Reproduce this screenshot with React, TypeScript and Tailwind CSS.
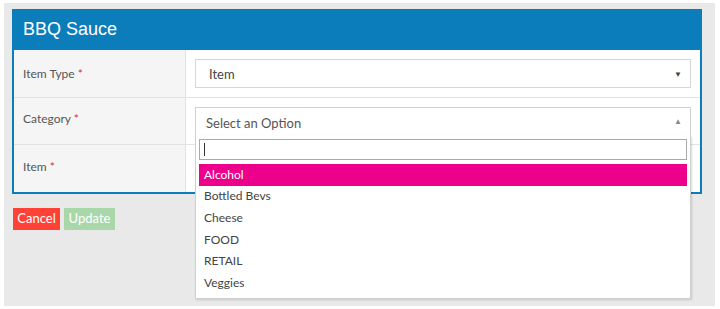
import React from 'react';

const options = ['Alcohol', 'Bottled Bevs', 'Cheese', 'FOOD', 'RETAIL', 'Veggies'];

const Label: React.FC<{ text: string; top?: string }> = ({ text, top = 'pt-[13px]' }) => (
  <div className={`w-[172px] shrink-0 border-r border-[#e2e2e2] bg-[#f5f5f5] pl-[9px] text-[12px] text-[#555] ${top}`}>
    {text} <span className="text-[#d9302c]">*</span>
  </div>
);

const App: React.FC = () => {
  return (
    <div className="h-[309px] w-[720px] bg-white pl-[4px] pt-[3px]" style={{ fontFamily: 'Lato, "Open Sans", sans-serif' }}>
      <div className="h-[303px] w-[711px] bg-[#e9e9e9] pl-[8px] pt-[6px]">
        <div className="w-[690px] border-2 border-t-0 border-[#0b7dbb] bg-white">
          <div
            className="flex h-[41px] items-center bg-[#0b7dbb] pl-[9px] text-[18px] text-white"
            style={{ fontFamily: '"Liberation Sans", Arial, sans-serif' }}
          >
            BBQ Sauce
          </div>
          <div className="flex h-[48px] border-b border-[#e2e2e2]">
            <Label text="Item Type" top="pt-[15px]" />
            <div className="flex-1 px-[9px] pt-[9px]">
              <div className="flex h-[29px] items-center justify-between border border-[#d6d6d6] pl-[13px] pr-[8px] text-[13px] text-[#444]">
                <span className="pt-[2px]">Item</span>
                <span className="text-[8px] text-[#444]">▼</span>
              </div>
            </div>
          </div>
          <div className="flex h-[47px] border-b border-[#e2e2e2]">
            <Label text="Category" top="pt-[12px]" />
            <div className="relative flex-1 px-[9px] pt-[9px]">
              <div className="flex h-[29px] items-center justify-between border border-b-0 border-[#d0d0d0] pl-[10px] pr-[8px] text-[13px] text-[#555]">
                <span className="pt-[4px]">Select an Option</span>
                <span className="pb-[2px] text-[8px] text-[#888]">▲</span>
              </div>
              <div className="absolute left-[9px] right-[9px] top-[38px] z-10 border border-t-0 border-[#cfcfcf] bg-white px-[3px] pb-[4px] pt-[3px] shadow-[1px_1px_2px_rgba(0,0,0,0.15)]">
                <div className="flex h-[21px] items-center border border-[#aaa] pl-[4px]">
                  <span className="h-[13px] w-[1px] bg-[#333]" />
                </div>
                <div className="mt-[4px]">
                  {options.map((o, i) => (
                    <div
                      key={o}
                      className={
                        i === 0
                          ? 'flex h-[21.6px] items-center bg-[#ec008c] pl-[5px] text-[12px] text-white'
                          : 'flex h-[21.6px] items-center pl-[5px] text-[12px] text-[#444]'
                      }
                    >
                      {o}
                    </div>
                  ))}
                </div>
              </div>
            </div>
          </div>
          <div className="flex h-[47px]">
            <Label text="Item" />
            <div className="flex-1" />
          </div>
        </div>
        <div className="mt-[14px] flex gap-[4px] pl-[1px]">
          <button className="h-[22px] w-[47px] bg-[#ff4136] text-[13px] text-white">Cancel</button>
          <button className="h-[22px] w-[51px] bg-[#a9d7a9] text-[13px] text-white">Update</button>
        </div>
      </div>
    </div>
  );
};

export default App;
